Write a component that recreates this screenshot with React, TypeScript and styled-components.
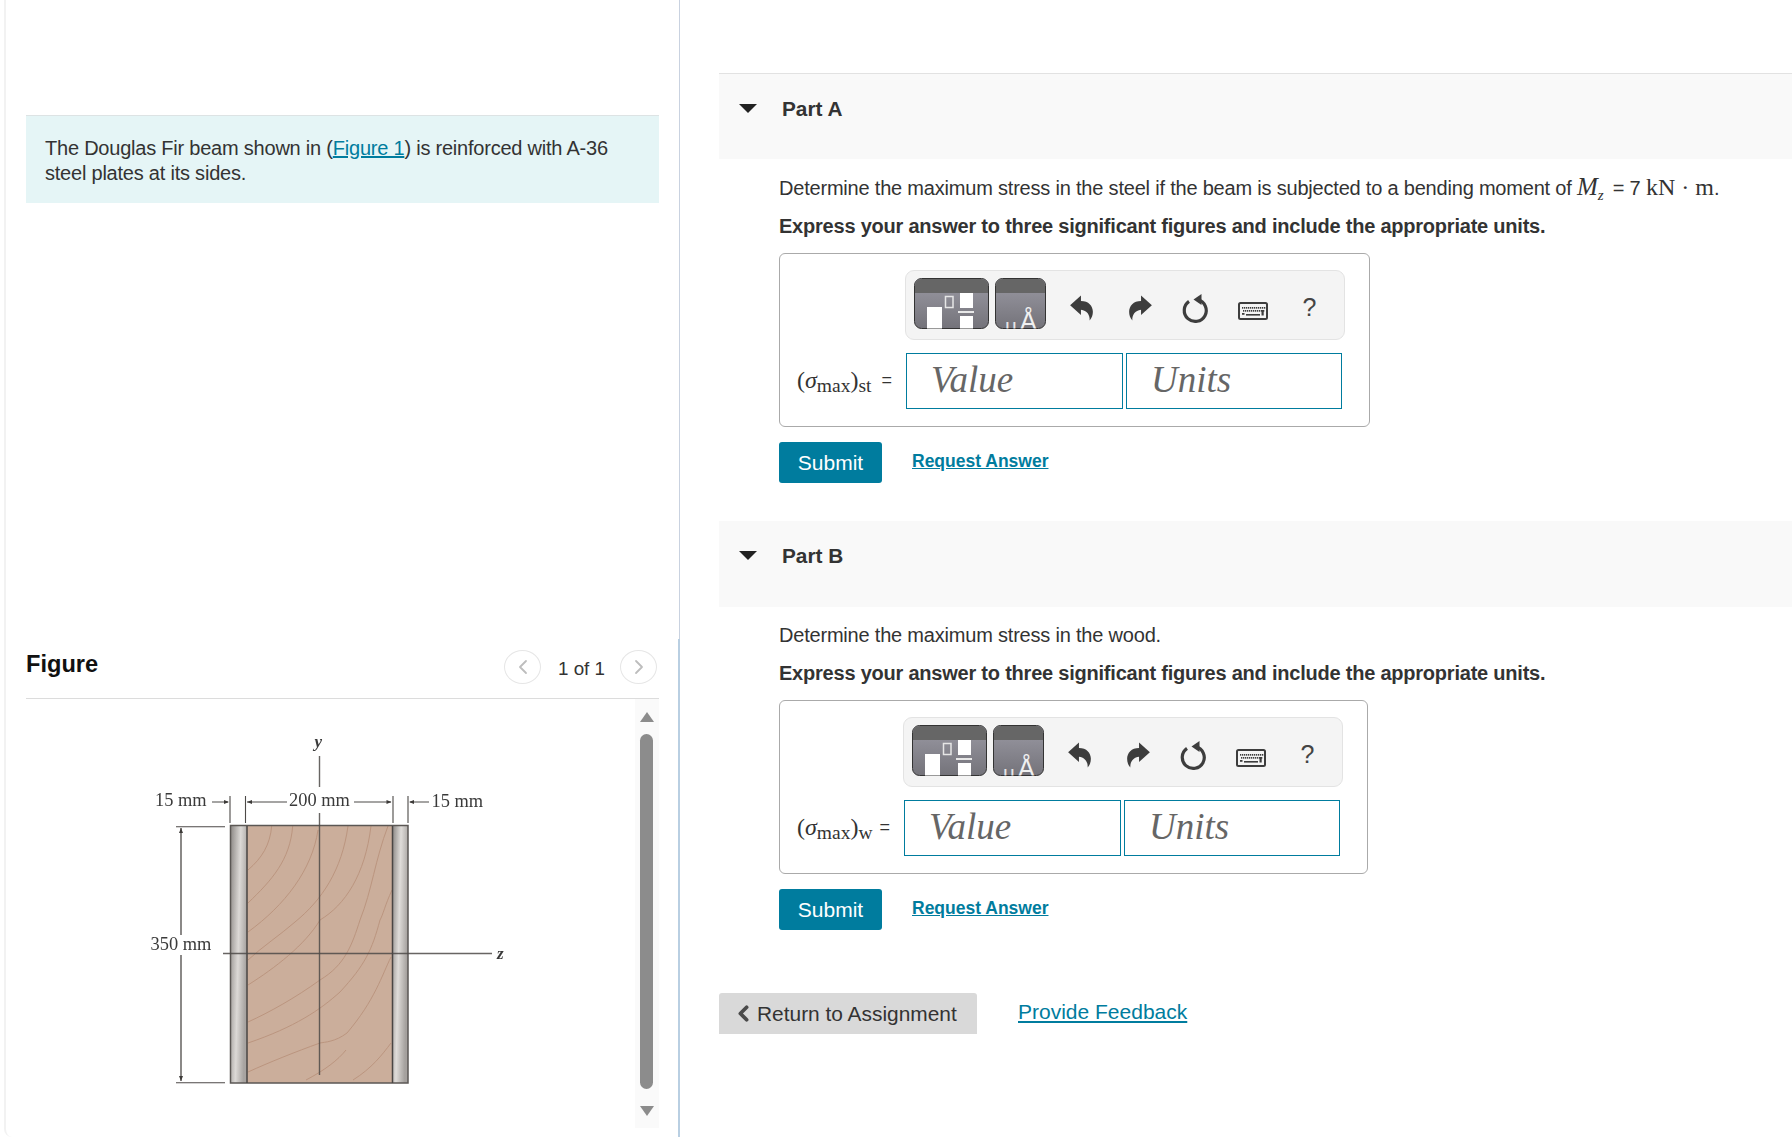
import React from 'react';
import styled, { createGlobalStyle } from 'styled-components';
import { ChevronLeft, ChevronRight } from 'lucide-react';

const TEAL = '#007c9e';
const Global = createGlobalStyle`
  html, body { margin: 0; padding: 0; background: #fff; }
  body { font-family: "Liberation Sans", Arial, sans-serif; color: #333; }
  * { box-sizing: border-box; }
`;
const Page = styled.div`
  display: grid; grid-template-columns: 680px 1fr; width: 1792px; height: 1137px; overflow: hidden;
`;
const LeftPanel = styled.aside`
  margin-left: 4px; height: 1137px; border-left: 2px solid #f2f2f2;
  border-bottom-left-radius: 8px; display: flex; flex-direction: column;
`;
const IntroSection = styled.section`
  height: 639px; padding: 115px 20px 0 20px; border-right: 1px solid #c9d2e0;
`;
const IntroBox = styled.div`
  background: #e5f5f6; border-top: 1px solid #dde3e4; padding: 20px 19px 18px 19px; height: 88px;
  font-size: 20px; line-height: 24.5px; letter-spacing: -0.22px;
`;
const Link = styled.a`
  color: ${TEAL}; text-decoration: underline;
`;
const FigureSection = styled.section`
  flex: 1; padding: 0 19px 0 20px; border-right: 2px solid #b9cfe2;
  display: flex; flex-direction: column;
`;
const FigureHeader = styled.header`
  display: flex; justify-content: space-between; align-items: flex-start;
  height: 60px; padding: 11px 2px 0 0; border-bottom: 1px solid #dcdcdc;
`;
const FigureTitle = styled.h2`
  margin: 0; font-size: 23.6px; line-height: 28px; font-weight: 700; color: #111;
`;
const Pager = styled.div`
  display: flex; align-items: center; gap: 16px; font-size: 18.8px; color: #333;
`;
const PagerLabel = styled.span`
  margin: 4px -1px 0 1px;
`;
const PagerButton = styled.span`
  width: 37px; height: 34px; border: 1px solid #e6e6e6; border-radius: 50%;
  display: flex; align-items: center; justify-content: center; color: #bdbdbd;
`;
const FigureBody = styled.div`
  display: flex; height: 429px;
`;
const FigureSvg = styled.svg`
  width: 609px; height: 429px; display: block; flex: none; filter: blur(0.45px);
`;
const ScrollTrack = styled.div`
  width: 24px; background: #fafafa; display: flex; flex-direction: column; align-items: center;
  padding: 13px 1px 12px 0;
`;
const ScrollArrowUp = styled.span`
  width: 0; height: 0; border-left: 7px solid transparent; border-right: 7px solid transparent;
  border-bottom: 10px solid #8c8c8c;
`;
const ScrollArrowDown = styled.span`
  width: 0; height: 0; border-left: 7px solid transparent; border-right: 7px solid transparent;
  border-top: 10px solid #8c8c8c;
`;
const ScrollThumb = styled.span`
  width: 13px; height: 355px; background: #8c8c8c; border-radius: 7px; margin: 12px 0 17px;
`;
const RightColumn = styled.main`
  padding: 73px 0 0 39px; display: flex; flex-direction: column;
`;
const PartHeader = styled.div<{ $first?: boolean }>`
  height: 86px; background: #f9f9f9; display: flex; align-items: flex-start; gap: 25px;
  padding: ${p => (p.$first ? 23 : 22)}px 0 0 20px;
  border-top: 1px solid ${p => (p.$first ? '#e2e2e2' : '#f9f9f9')};
  font-size: 20.8px; line-height: 24px; font-weight: 700;
`;
const Caret = styled.span`
  width: 0; height: 0; margin-top: 7px; border-left: 9px solid transparent; border-right: 9px solid transparent;
  border-top: 9px solid #222;
`;
const PartBody = styled.div`
  padding: 16px 0 38px 60px;
`;
const Prompt = styled.p`
  margin: 0 0 14px; font-size: 20px; line-height: 24px; letter-spacing: -0.2px; white-space: nowrap;
`;
const Instruction = styled(Prompt)`
  font-weight: 700; margin-bottom: 15px; letter-spacing: -0.22px;
`;
const MathText = styled.span`
  font-family: "Liberation Serif", serif; font-size: 24px; letter-spacing: 0;
`;
const MathItalic = styled.i`
  font-family: "Liberation Serif", serif; font-size: 25px; letter-spacing: 0;
`;
const MathSub = styled.sub`
  font-family: "Liberation Serif", serif; font-style: italic; font-size: 15px; line-height: 0; margin-right: 4px;
`;
const AnswerBox = styled.div`
  width: fit-content; border: 1px solid #aaa; border-radius: 6px;
  padding: 16px 27px 17px 17px; display: grid; grid-template-columns: auto auto; column-gap: 14px; row-gap: 13px;
  align-items: center;
`;
const Toolbar = styled.div`
  grid-column: 2; margin: 0 -3px 0 -1px; height: 70px; border: 1px solid #e3e3e3; border-radius: 9px;
  background: #f4f4f4; display: flex; align-items: flex-start; padding: 7px 0 0 8px;
`;
const TemplateButton = styled.svg`
  display: block; flex: none; margin-right: 6px;
`;
const ToolIcon = styled.span`
  width: 57px; height: 51px; display: flex; align-items: center; justify-content: center;
  padding-top: 8px; flex: none; color: #3d3d3d;
`;
const FirstTool = styled(ToolIcon)`
  margin-left: 1px;
`;
const RedoTool = styled(ToolIcon)`
  padding-left: 3px;
`;
const HelpMark = styled.span`
  font-size: 25px; line-height: 1; color: #444;
`;
const Label = styled.div<{ $w: number }>`
  width: ${p => p.$w}px; font-family: "Liberation Serif", serif; font-size: 24px; white-space: nowrap; color: #333;
  display: flex; align-items: baseline; padding-bottom: 2px;
`;
const LabelSub = styled.span`
  font-size: 19.5px; position: relative; top: 4px;
`;
const LabelEq = styled.span`
  font-family: "Liberation Sans", sans-serif; font-size: 18px; margin-left: auto; position: relative; top: -2px;
`;
const Inputs = styled.div`
  display: flex; gap: 3px;
`;
const AnswerInput = styled.input<{ $w: number }>`
  width: ${p => p.$w}px; height: 56px; border: 1.5px solid ${TEAL}; padding: 0 0 4px 24px; outline: none;
  font-family: "Liberation Serif", serif; font-style: italic; font-size: 37px; background: #fff; color: #666;
  &::placeholder { color: #666; opacity: 1; }
`;
const Actions = styled.div`
  display: flex; align-items: center; gap: 30px; margin-top: 15px;
`;
const SubmitButton = styled.button`
  width: 103px; height: 41px; border: 0; border-radius: 3px; background: ${TEAL}; color: #fff;
  font: 21px "Liberation Sans", sans-serif; padding: 0;
`;
const RequestLink = styled(Link)`
  font-size: 17.5px; font-weight: 700; position: relative; top: -1px;
`;
const Footer = styled.div`
  display: flex; align-items: flex-start; gap: 41px; margin-top: 25px;
`;
const ReturnButton = styled.button`
  width: 258px; height: 41px; border: 0; border-radius: 3px 3px 0 0; background: #d9d9d9; color: #333;
  font: 20.9px "Liberation Sans", sans-serif; display: flex; align-items: center; padding: 0 0 0 12px; gap: 1px;
`;
const FeedbackLink = styled(Link)`
  font-size: 21px; line-height: 24px; margin-top: 7px;
`;

const Undo = ({ flip }: { flip?: boolean }) => (
  <svg width="23" height="26" viewBox="0 0 21 24" style={flip ? { transform: 'scaleX(-1)' } : undefined}>
    <path d="M0 9.5 L10 0.5 V5.5 C17 5.5 21 10 21 15.5 C21 18.5 20 21.5 18 23.5 C18.5 18.5 15.5 14 10 13.5 V18.5 Z" fill="currentColor" />
  </svg>
);
const Refresh = () => (
  <svg width="30" height="32" viewBox="0 0 30 32">
    <path d="M17 7.8 A11 11 0 1 1 8 9.4" fill="none" stroke="currentColor" strokeWidth="3.2" />
    <path d="M12.5 7.5 L20.5 2 V13 Z" fill="currentColor" />
  </svg>
);
const Keyboard = () => {
  const keys: React.ReactElement[] = [];
  [[5, 12], [8, 11]].forEach(([y, n], r) => {
    for (let i = 0; i < n; i++) keys.push(<rect key={`${r}-${i}`} x={4 + r + i * 2} y={y} width="1.3" height="1.7" fill="#3d3d3d" />);
  });
  return (
    <svg width="30" height="18" viewBox="0 0 30 18" style={{ marginTop: 6 }}>
      <rect x="1" y="1" width="28" height="16" rx="1.5" fill="#f4f4f4" stroke="#3d3d3d" strokeWidth="2" />
      {keys}
      <rect x="4" y="11" width="2.5" height="1.8" fill="#3d3d3d" />
      <rect x="8" y="12" width="14" height="1.6" fill="#3d3d3d" />
      <rect x="23.5" y="8" width="2.2" height="5.5" fill="#3d3d3d" />
    </svg>
  );
};
const Face = ({ id, w }: { id: string; w: number }) => (
  <>
    <defs>
      <linearGradient id={id} x1="0" x2="0" y1="0" y2="1">
        <stop offset="0" stopColor="#9b9aa4" />
        <stop offset="1" stopColor="#74737a" />
      </linearGradient>
    </defs>
    <rect x="0.5" y="0.5" width={w - 1} height="50" rx="7" fill={`url(#${id})`} stroke="#333" />
    <path d={`M1 15 V7.5 A6.5 6.5 0 0 1 7.5 1 H${w - 7.5} A6.5 6.5 0 0 1 ${w - 1} 7.5 V15 Z`} fill="#666" />
  </>
);
const Toolkit = ({ uid }: { uid: string }) => (
  <Toolbar>
    <TemplateButton width="75" height="51" viewBox="0 0 75 51">
      <Face id={`a${uid}`} w={75} />
      <rect x="13" y="29" width="15" height="21.5" fill="#fff" />
      <rect x="31.5" y="18.5" width="7.5" height="11" fill="none" stroke="#e6e6e6" strokeWidth="1.5" />
      <rect x="46" y="15" width="13" height="15" fill="#fff" />
      <rect x="44" y="33" width="16" height="2" fill="#e8e8e8" />
      <rect x="46" y="38" width="13" height="12.5" fill="#fff" />
    </TemplateButton>
    <TemplateButton width="51" height="51" viewBox="0 0 51 51">
      <Face id={`b${uid}`} w={51} />
      <svg x="0" y="0" width="51" height="50.5" viewBox="0 0 51 50.5">
        <text x="10" y="55" fontFamily="Liberation Sans, sans-serif" fontSize="21" fill="#e6e6e6">µ</text>
        <text x="25" y="52" fontFamily="Liberation Sans, sans-serif" fontSize="25" fill="#f0f0f0">Å</text>
      </svg>
    </TemplateButton>
    <FirstTool><Undo /></FirstTool>
    <RedoTool><Undo flip /></RedoTool>
    <ToolIcon><Refresh /></ToolIcon>
    <ToolIcon><Keyboard /></ToolIcon>
    <ToolIcon><HelpMark>?</HelpMark></ToolIcon>
  </Toolbar>
);
const Answer = ({ sub, uid, labelWidth }: { sub: string; uid: string; labelWidth: number }) => (
  <>
    <AnswerBox>
      <Toolkit uid={uid} />
      <Label $w={labelWidth}>
        (<i>σ</i><LabelSub>max</LabelSub>)<LabelSub>{sub}</LabelSub><LabelEq>=</LabelEq>
      </Label>
      <Inputs>
        <AnswerInput $w={217} placeholder="Value" readOnly />
        <AnswerInput $w={216} placeholder="Units" readOnly />
      </Inputs>
    </AnswerBox>
    <Actions>
      <SubmitButton>Submit</SubmitButton>
      <RequestLink href="#">Request Answer</RequestLink>
    </Actions>
  </>
);

const grain = [
  'M271.7 826 C270 845 262 858 248 870',
  'M292.7 826 C290 860 272 880 248 903',
  'M318 830 C312 870 285 905 248 932',
  'M348 826 C342 870 322 900 295 922 C280 935 262 947 248 960',
  'M371 826 C365 875 345 905 320 920 C305 945 275 968 248 985',
  'M388 826 C375 860 372 890 360 920 C352 945 345 965 320 980 C295 998 270 1012 248 1022',
  'M392 890 C385 905 383 915 380 920 C372 950 365 965 340 992 C320 1010 295 1027 248 1043',
  'M391 957 C382 975 375 1000 347 1033 C335 1042 325 1042 320 1043 C295 1052 270 1062 248 1072',
  'M391 1043 C382 1055 372 1068 353 1080',
  'M346 1050 C338 1060 325 1070 306 1080',
];
const Beam = () => (
  <FigureSvg viewBox="26 699 609 429">
    <defs>
      <linearGradient id="steelL" x1="0" x2="1" y1="0" y2="0.35">
        <stop offset="0" stopColor="#8f8b88" />
        <stop offset="0.55" stopColor="#dcd9d6" />
        <stop offset="1" stopColor="#a8a4a1" />
      </linearGradient>
      <linearGradient id="steelR" x1="0" x2="1" y1="0" y2="0.35">
        <stop offset="0" stopColor="#8b8784" />
        <stop offset="0.5" stopColor="#dfdcd9" />
        <stop offset="1" stopColor="#a5a19e" />
      </linearGradient>
    </defs>
    <rect x="231" y="826" width="16" height="257" fill="url(#steelL)" />
    <rect x="392.5" y="826" width="15.5" height="257" fill="url(#steelR)" />
    <rect x="247" y="826" width="145.5" height="257" fill="#cbae9b" />
    <g fill="none" stroke="#bb957f" strokeWidth="1">
      {grain.map(d => <path key={d} d={d} />)}
    </g>
    <rect x="230.5" y="825.5" width="177.5" height="257.5" fill="none" stroke="#5b5754" strokeWidth="1.5" />
    <path d="M247 826 V1083 M392.5 826 V1083" stroke="#4a4644" strokeWidth="1.5" />
    <path d="M223 953.5 H492" stroke="#4d4a48" strokeOpacity="0.85" strokeWidth="1.4" />
    <path d="M319.5 756 V787 M319.5 813 V1075" stroke="#4d4a48" strokeOpacity="0.85" strokeWidth="1.4" />
    <g stroke="#4d4a48" strokeWidth="1.1" fill="none">
      <path d="M230 796 V823 M245.5 796 V823 M393 796 V823 M408 796 V823" />
      <path d="M212 802 H228 M247 802 H287 M354 802 H391 M410 802 H429" />
      <path d="M176 826.7 H225 M176 1082.7 H225" />
      <path d="M181 828 V935 M181 955 V1081" strokeWidth="1.3" />
    </g>
    <g fill="#3c3a38">
      <path d="M229 802 l-5 -2 v4 Z M247 802 l5 -2 v4 Z M391.5 802 l-5 -2 v4 Z M409 802 l5 -2 v4 Z M181 828 l-2 5 h4 Z M181 1081 l-2 -5 h4 Z" />
    </g>
    <g fontFamily="Liberation Serif, serif" fontSize="18.4" fill="#3a3a3a">
      <text x="155" y="806">15 mm</text>
      <text x="289" y="806">200 mm</text>
      <text x="431.5" y="807">15 mm</text>
      <text x="150.5" y="950">350 mm</text>
      <text x="314.5" y="747" fontStyle="italic" fontSize="17" fontWeight="700">y</text>
      <text x="497" y="959" fontStyle="italic" fontSize="17" fontWeight="700">z</text>
    </g>
  </FigureSvg>
);

export default function App() {
  return (
    <Page>
      <Global />
      <LeftPanel>
        <IntroSection>
          <IntroBox>
            The Douglas Fir beam shown in (<Link href="#">Figure 1</Link>) is reinforced with A-36 steel plates at its sides.
          </IntroBox>
        </IntroSection>
        <FigureSection>
          <FigureHeader>
            <FigureTitle>Figure</FigureTitle>
            <Pager>
              <PagerButton><ChevronLeft size={24} strokeWidth={1.8} /></PagerButton>
              <PagerLabel>1 of 1</PagerLabel>
              <PagerButton><ChevronRight size={24} strokeWidth={1.8} /></PagerButton>
            </Pager>
          </FigureHeader>
          <FigureBody>
            <Beam />
            <ScrollTrack>
              <ScrollArrowUp />
              <ScrollThumb />
              <ScrollArrowDown />
            </ScrollTrack>
          </FigureBody>
        </FigureSection>
      </LeftPanel>
      <RightColumn>
        <PartHeader $first><Caret />Part A</PartHeader>
        <PartBody>
          <Prompt>
            Determine the maximum stress in the steel if the beam is subjected to a bending moment of{' '}
            <MathItalic>M</MathItalic><MathSub>z</MathSub> = 7 <MathText>kN · m</MathText>.
          </Prompt>
          <Instruction>Express your answer to three significant figures and include the appropriate units.</Instruction>
          <Answer sub="st" uid="a" labelWidth={95} />
        </PartBody>
        <PartHeader><Caret />Part B</PartHeader>
        <PartBody>
          <Prompt>Determine the maximum stress in the wood.</Prompt>
          <Instruction>Express your answer to three significant figures and include the appropriate units.</Instruction>
          <Answer sub="w" uid="b" labelWidth={93} />
        </PartBody>
        <Footer>
          <ReturnButton><ChevronLeft size={25} strokeWidth={3.6} color="#4a4a4a" />Return to Assignment</ReturnButton>
          <FeedbackLink href="#">Provide Feedback</FeedbackLink>
        </Footer>
      </RightColumn>
    </Page>
  );
}
